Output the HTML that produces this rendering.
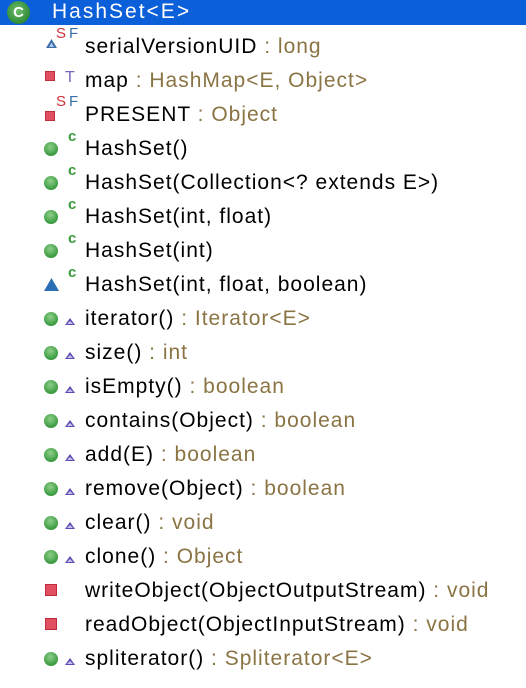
<!DOCTYPE html>
<html><head><style>
body{margin:0;width:526px;height:688px;background:#fff;font-family:"Liberation Sans",Arial,sans-serif;position:relative;overflow:hidden}
.hdr{position:absolute;left:0;top:0;width:526px;height:25px;background:#0b5fd9}
.hdr .t{position:absolute;left:52px;top:0px;color:#fff;font-size:21px;letter-spacing:2px}
.ci{position:absolute;left:7px;top:1px;width:23px;height:23px;border-radius:50%;background:radial-gradient(circle at 45% 40%,#6fbf6b,#2e8a36 70%,#1f6a28);color:#fff;font-weight:bold;font-size:15px;text-align:center;line-height:23px}
.r{position:absolute;left:0;width:526px;height:34px}
.r .t{position:absolute;left:85px;top:6px;font-size:21px;letter-spacing:1px;color:#000;white-space:nowrap}
.ty{color:#8a7444}
.g{position:absolute;left:44px;top:11px;width:14px;height:14px;border-radius:50%;background:radial-gradient(circle at 45% 35%,#8fd08a,#3a9a40 70%,#2d7d33)}
.tri{position:absolute;left:65px;top:17px;width:0;height:0;border-left:5px solid transparent;border-right:5px solid transparent;border-bottom:7px solid #5a4cb0}
.tri:after{content:"";position:absolute;left:-3px;top:3px;border-left:3px solid transparent;border-right:3px solid transparent;border-bottom:3px solid #c9c2f0}
.c{position:absolute;left:68px;top:-3px;color:#3a9a3a;font-weight:bold;font-size:15px}
.sq{position:absolute;left:45px;top:11px;width:12px;height:12px;background:#e05060;border:1px solid #c02a3c;box-sizing:border-box}
.sf{position:absolute;left:56px;top:-4px;font-size:15px}
.sf .s{color:#d0303c}.sf .f{color:#3a6ea8;margin-left:3px}
</style></head><body>
<div class="hdr"><div class="ci">C</div><div class="t">HashSet&lt;E&gt;</div></div>

<div class="r" style="top:29px"><svg style="position:absolute;left:45px;top:9px" width="13" height="11"><polygon points="6.5,1 12,10 1,10" fill="#3a6ea8"/><polygon points="6.5,4.5 9,9 4,9" fill="#a9c8ec"/></svg><div class="sf"><span class="s">S</span><span class="f">F</span></div><div class="t">serialVersionUID <span class="ty">: long</span></div></div>
<div class="r" style="top:63px"><div class="sq" style="top:8px;width:10px;height:10px"></div><div style="position:absolute;left:65px;top:6px;color:#7a62c0;font-size:16px">T</div><div class="t">map <span class="ty">: HashMap&lt;E, Object&gt;</span></div></div>
<div class="r" style="top:97px"><div class="sq" style="top:14px;width:10px;height:10px"></div><div class="sf"><span class="s">S</span><span class="f">F</span></div><div class="t">PRESENT <span class="ty">: Object</span></div></div>
<div class="r" style="top:131px"><div class="g"></div><div class="c">c</div><div class="t">HashSet()</div></div>
<div class="r" style="top:165px"><div class="g"></div><div class="c">c</div><div class="t">HashSet(Collection&lt;? extends E&gt;)</div></div>
<div class="r" style="top:199px"><div class="g"></div><div class="c">c</div><div class="t">HashSet(int, float)</div></div>
<div class="r" style="top:233px"><div class="g"></div><div class="c">c</div><div class="t">HashSet(int)</div></div>
<div class="r" style="top:267px"><svg style="position:absolute;left:44px;top:11px" width="15" height="13"><polygon points="7.5,0 15,13 0,13" fill="#2a6fb5"/></svg><div class="c">c</div><div class="t">HashSet(int, float, boolean)</div></div>
<div class="r" style="top:301px"><div class="g"></div><div class="tri"></div><div class="t">iterator() <span class="ty">: Iterator&lt;E&gt;</span></div></div>
<div class="r" style="top:335px"><div class="g"></div><div class="tri"></div><div class="t">size() <span class="ty">: int</span></div></div>
<div class="r" style="top:369px"><div class="g"></div><div class="tri"></div><div class="t">isEmpty() <span class="ty">: boolean</span></div></div>
<div class="r" style="top:403px"><div class="g"></div><div class="tri"></div><div class="t">contains(Object) <span class="ty">: boolean</span></div></div>
<div class="r" style="top:437px"><div class="g"></div><div class="tri"></div><div class="t">add(E) <span class="ty">: boolean</span></div></div>
<div class="r" style="top:471px"><div class="g"></div><div class="tri"></div><div class="t">remove(Object) <span class="ty">: boolean</span></div></div>
<div class="r" style="top:505px"><div class="g"></div><div class="tri"></div><div class="t">clear() <span class="ty">: void</span></div></div>
<div class="r" style="top:539px"><div class="g"></div><div class="tri"></div><div class="t">clone() <span class="ty">: Object</span></div></div>
<div class="r" style="top:573px"><div class="sq"></div><div class="t">writeObject(ObjectOutputStream) <span class="ty">: void</span></div></div>
<div class="r" style="top:607px"><div class="sq"></div><div class="t">readObject(ObjectInputStream) <span class="ty">: void</span></div></div>
<div class="r" style="top:641px"><div class="g"></div><div class="tri"></div><div class="t">spliterator() <span class="ty">: Spliterator&lt;E&gt;</span></div></div>
</body></html>
